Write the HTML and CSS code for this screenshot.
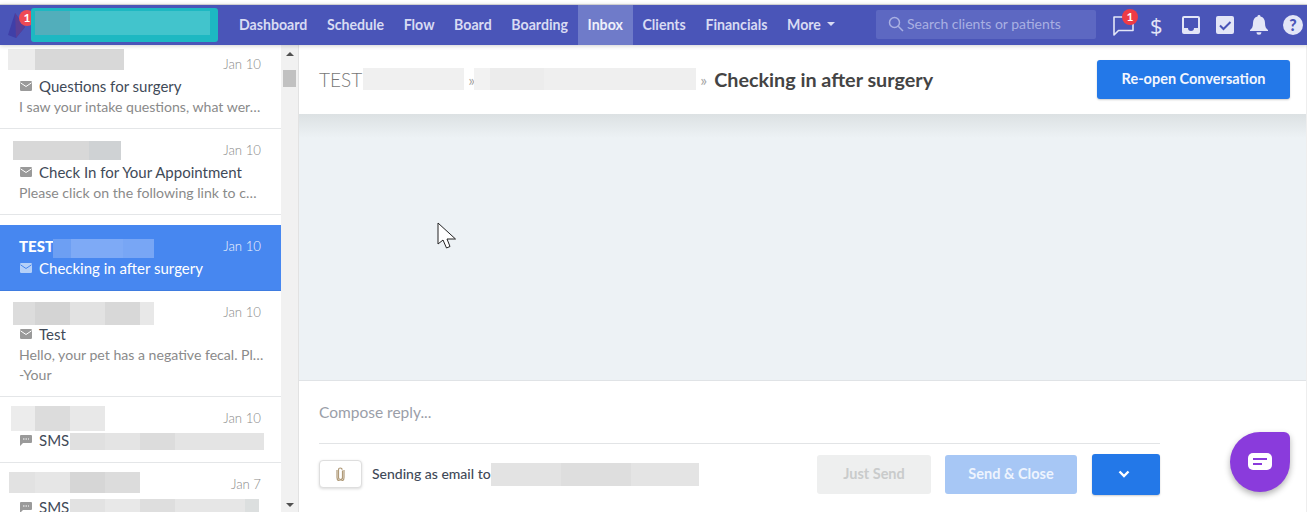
FILE: index.html
```html
<!DOCTYPE html>
<html lang="en">
<head>
<meta charset="utf-8">
<title>Inbox</title>
<link rel="stylesheet" href="styles.css">
</head>
<body>
<div class="app">
  <header class="nav">
    <div class="brand">
      <svg class="brand-mark" width="18" height="25" viewBox="0 0 18 25"><path d="M7 0 L0 22 L8 25 L17 14Z" fill="#3f3fa8"/><path d="M7 0 L17 14 L8 25Z" fill="#5a3f96"/></svg>
      <span class="brand-badge">1</span>
      <div class="brand-redact"><span class="brand-redact-in"></span></div>
    </div>
    <nav class="nav-links">
      <a class="nav-link">Dashboard</a>
      <a class="nav-link">Schedule</a>
      <a class="nav-link">Flow</a>
      <a class="nav-link">Board</a>
      <a class="nav-link">Boarding</a>
      <a class="nav-link nav-link-active">Inbox</a>
      <a class="nav-link">Clients</a>
      <a class="nav-link">Financials</a>
      <a class="nav-link">More<span class="caret"></span></a>
    </nav>
    <div class="search">
      <svg width="16" height="16" viewBox="0 0 16 16" fill="none" stroke="#a9b0e2" stroke-width="1.5"><circle cx="6.5" cy="6.5" r="5"/><path d="M10.2 10.2 L15 15"/></svg>
      <span>Search clients or patients</span>
    </div>
    <div class="nav-icons">
      <span class="nav-icon nav-chat">
        <svg width="21" height="21" viewBox="0 0 21 21" fill="none" stroke="#e3e6f7" stroke-width="1.6"><path d="M1 2 H20 V15.5 H5.5 L1 20Z" stroke-linejoin="round"/></svg>
        <span class="chat-badge">1</span>
      </span>
      <span class="nav-icon nav-dollar">$</span>
      <span class="nav-icon">
        <svg width="18" height="18" viewBox="0 0 18 18"><path fill-rule="evenodd" fill="#e3e6f7" d="M2 0H16a2 2 0 0 1 2 2V16a2 2 0 0 1-2 2H2a2 2 0 0 1-2-2V2a2 2 0 0 1 2-2ZM2 2V12H6a3 3 0 0 0 6 0H16V2Z"/></svg>
      </span>
      <span class="nav-icon">
        <svg width="18" height="18" viewBox="0 0 18 18"><rect width="18" height="18" rx="2" fill="#e3e6f7"/><path d="M4 9.5 L7.5 13 L14.5 6" fill="none" stroke="#4a55b8" stroke-width="2"/></svg>
      </span>
      <span class="nav-icon">
        <svg width="18" height="20" viewBox="0 0 18 20"><path fill="#e3e6f7" d="M9 0a1.5 1.5 0 0 1 1.5 1.6C13.500 2.300 15 5 15 8c0 4 1 5.500 3 7v1H0v-1c2-1.500 3-3 3-7 0-3 1.500-5.700 4.500-6.400A1.500 1.500 0 0 1 9 0ZM6.500 17.300h5a2.500 2.500 0 0 1-5 0Z"/></svg>
      </span>
      <span class="nav-icon nav-help">?</span>
    </div>
  </header>

  <div class="content">
    <aside class="sidebar">
      <div class="list">
        <article class="row">
          <div class="row-head"><span class="redact name-a"></span><time class="date">Jan 10</time></div>
          <div class="subject"><svg class="mail" width="12" height="10" viewBox="0 0 12 10"><rect width="12" height="10" rx="1.200" fill="#9a9a9a"/><path d="M0.500 1.800 L6 5.500 L11.500 1.800" fill="none" stroke="#fff" stroke-width="1"/></svg><span>Questions for surgery</span></div>
          <p class="preview">I saw your intake questions, what wer…</p>
        </article>
        <article class="row row-spaced">
          <div class="row-head"><span class="redact name-b"></span><time class="date">Jan 10</time></div>
          <div class="subject"><svg class="mail" width="12" height="10" viewBox="0 0 12 10"><rect width="12" height="10" rx="1.200" fill="#9a9a9a"/><path d="M0.500 1.800 L6 5.500 L11.500 1.800" fill="none" stroke="#fff" stroke-width="1"/></svg><span>Check In for Your Appointment</span></div>
          <p class="preview">Please click on the following link to c…</p>
        </article>
        <article class="row row-selected">
          <div class="row-head"><strong class="sel-name">TEST</strong><span class="redact name-sel"></span><time class="date">Jan 10</time></div>
          <div class="subject"><svg class="mail" width="12" height="10" viewBox="0 0 12 10"><rect width="12" height="10" rx="1.200" fill="#b5d0f8"/><path d="M0.500 1.800 L6 5.500 L11.500 1.800" fill="none" stroke="#4787f0" stroke-width="1"/></svg><span>Checking in after surgery</span></div>
        </article>
        <article class="row">
          <div class="row-head"><span class="redact name-c"></span><time class="date">Jan 10</time></div>
          <div class="subject"><svg class="mail" width="12" height="10" viewBox="0 0 12 10"><rect width="12" height="10" rx="1.200" fill="#9a9a9a"/><path d="M0.500 1.800 L6 5.500 L11.500 1.800" fill="none" stroke="#fff" stroke-width="1"/></svg><span>Test</span></div>
          <p class="preview">Hello, your pet has a negative fecal. Pl…</p>
          <p class="preview">-Your</p>
        </article>
        <article class="row">
          <div class="row-head"><span class="redact name-d"></span><time class="date">Jan 10</time></div>
          <div class="subject"><svg class="mail" width="12" height="11" viewBox="0 0 12 11"><path d="M1 0H11a1 1 0 0 1 1 1V7a1 1 0 0 1-1 1H3L0 11V1a1 1 0 0 1 1-1Z" fill="#9a9a9a"/><path d="M3 4H9" stroke="#fff" stroke-width="1" stroke-dasharray="1.500 1"/></svg><span>SMS</span><span class="redact sms-a"></span></div>
        </article>
        <article class="row row-last">
          <div class="row-head"><span class="redact name-e"></span><time class="date">Jan 7</time></div>
          <div class="subject"><svg class="mail" width="12" height="11" viewBox="0 0 12 11"><path d="M1 0H11a1 1 0 0 1 1 1V7a1 1 0 0 1-1 1H3L0 11V1a1 1 0 0 1 1-1Z" fill="#9a9a9a"/><path d="M3 4H9" stroke="#fff" stroke-width="1" stroke-dasharray="1.500 1"/></svg><span>SMS</span><span class="redact sms-b"></span></div>
        </article>
      </div>
      <div class="scrollbar">
        <span class="arrow-up"></span>
        <span class="thumb"></span>
        <span class="arrow-down"></span>
      </div>
    </aside>

    <main class="main">
      <div class="convo-head">
        <div class="crumbs">
          <span class="crumb">TEST</span>
          <span class="redact crumb-a"></span>
          <span class="sep">»</span>
          <span class="redact crumb-b"></span>
          <span class="sep">»</span>
          <strong class="crumb-title">Checking in after surgery</strong>
        </div>
        <button class="btn btn-reopen">Re-open Conversation</button>
      </div>
      <div class="thread">
        <svg class="cursor" width="20" height="28" viewBox="0 0 20 28"><path d="M1 1 V22 L6 18 L9.500 26 L13 24.500 L10 17 L18.500 17Z" fill="#fff" stroke="#222" stroke-width="1"/></svg>
      </div>
      <div class="compose">
        <div class="compose-input">Compose reply...</div>
        <div class="compose-foot">
          <button class="btn-attach">
            <svg width="9" height="14" viewBox="0 0 9 14" fill="none" stroke="#b09a78" stroke-width="1.200"><path d="M6.500 3.500V10.500a2 2 0 0 1-4 0V2.800a1.800 1.800 0 0 1 3.600 0"/><path d="M8 3V10.500a3.500 3.500 0 0 1-7 0V3"/></svg>
          </button>
          <span class="send-as">Sending as email to</span>
          <span class="redact send-to"></span>
          <div class="actions">
            <button class="btn btn-just">Just Send</button>
            <button class="btn btn-close">Send &amp; Close</button>
            <button class="btn btn-more">
              <svg width="12" height="8" viewBox="0 0 12 8" fill="none" stroke="#fff" stroke-width="2.400"><path d="M1.500 1.500 L6 6 L10.500 1.500"/></svg>
            </button>
          </div>
        </div>
      </div>
      <div class="chat-widget">
        <svg width="24" height="18" viewBox="0 0 24 18"><rect width="24" height="17" rx="5" fill="#fff"/><path d="M5 6H19M5 11H14" stroke="#8a3bdc" stroke-width="2"/></svg>
      </div>
    </main>
  </div>
</div>
</body>
</html>
```
FILE: styles.css
```css
* { box-sizing: border-box; }
html, body { margin: 0; padding: 0; height: 100%; overflow: hidden; background: #fff; }
body { font-family: "Lato", "Noto Sans", sans-serif; color: #3f4a58; }
p { margin: 0; }
button { font-family: inherit; border: 0; cursor: pointer; }

.app { height: 512px; display: flex; flex-direction: column; padding-top: 4px; }

/* top bar */
.nav {
  height: 41px; flex: none; background: #4a55b8; border-top: 1px solid #cfcfcf;
  display: flex; align-items: stretch; position: relative; z-index: 3;
  box-shadow: 0 1px 4px rgba(0, 0, 0, .18);
}
.brand { width: 229.200px; flex: none; position: relative; }
.brand-mark { position: absolute; left: 8px; top: 8px; }
.brand-badge {
  position: absolute; left: 19px; top: 5px; width: 16px; height: 16px; border-radius: 50%;
  background: #ef4a55; color: #fff; font-size: 12px; font-weight: 700; text-align: center; line-height: 16px;
}
.brand-redact {
  position: absolute; left: 31px; top: 3px; width: 187px; height: 34px;
  background: #1db8c2; border-radius: 3px; padding: 3px 8px 7px 4px;
}
.brand-redact-in { display: block; height: 24px; background: linear-gradient(90deg, #52aebb 35px, #42c4cc 35px); }
.nav-links { display: flex; align-items: stretch; }
.nav-link {
  display: flex; align-items: center; padding: 0 9.800px 2px;
  color: #d8dbf3; font-size: 14.150px; font-weight: 700;
}
.nav-link-active { background: #6f7bc9; color: #eef0fb; }
.caret {
  margin-left: 6px; width: 0; height: 0;
  border-left: 4px solid transparent; border-right: 4px solid transparent; border-top: 4px solid #d8dbf3;
}
.search {
  margin: 5px 0 0 auto; width: 220px; height: 29px; flex: none; border-radius: 2px; background: #5d68c2;
  display: flex; align-items: center; gap: 3px; padding: 0 0 2px 12px;
  color: #a9b0e2; font-size: 14px;
}
.nav-icons { width: 211px; flex: none; display: flex; align-items: center; padding-left: 17px; }
.nav-icon { display: flex; flex: none; position: relative; color: #e3e6f7; }
.nav-chat { width: 37px; margin-top: 1px; }
.chat-badge {
  position: absolute; left: 9px; top: -6px; width: 16px; height: 16px; border-radius: 50%;
  background: #ef3b45; color: #fff; font-size: 12px; font-weight: 700; line-height: 16px; text-align: center;
}
.nav-dollar { width: 32px; font-size: 22px; font-family: "Open Sans", sans-serif; line-height: 22px; }
.nav-icon + .nav-icon + .nav-icon { margin-right: 16px; }
.nav-icon.nav-help {
  width: 20px; height: 20px; border-radius: 50%; background: #e3e6f7; color: #4a55b8; margin: 0 0 0 -1px;
  font-size: 16px; font-weight: 900; justify-content: center; line-height: 20px;
}

/* layout */
.content { flex: 1; display: flex; min-height: 0; }
.sidebar { width: 299px; flex: none; display: flex; border-right: 1px solid #e2e2e2; }

/* list */
.list { width: 281px; flex: none; overflow: hidden; }
.row { padding: 11px 20px 11px 19px; border-bottom: 1px solid #e4e6e8; background: #fff; }
.row:first-child { margin-top: -2px; }
.row-spaced { margin-bottom: 10px; }
.row-head { height: 20px; display: flex; align-items: center; }
.date { margin: 0 0 0 auto; font-size: 13.200px; font-weight: 300; color: #8a8a8a; }
.subject { height: 20px; margin: 2px 0 1px; display: flex; align-items: center; font-size: 15px; line-height: 20px; white-space: nowrap; }
.row-last .subject { margin-top: 3px; }
.mail { margin: 0 7px 0 1px; flex: none; }
.preview { font-size: 14.100px; line-height: 20px; color: #8a8a8a; white-space: nowrap; overflow: visible; }
.row-selected { background: #4787f0; border-bottom-color: #3f7ce0; color: #fff; }
.row-selected .date { color: #f2f6fe; }
.sel-name { font-size: 15px; font-weight: 900; color: #fff; }

/* redactions */
.redact { display: block; flex: none; background: #dedede; }
.name-a { width: 116px; height: 21px; margin: -9px 0 0 -11px; background: linear-gradient(90deg, #ececec 27px, #d8d8d8 27px); }
.name-b { width: 108px; height: 19px; margin-left: -6px; background: linear-gradient(90deg, #d8d8d8 70%, #cfd2d4 70%); }
.name-c { width: 141px; height: 23px; margin: 3px 0 0 -6px; background: linear-gradient(90deg, #dcdcdc 22px, #d4d4d4 22px 57px, #e2e2e2 57px 92px, #d8d8d8 92px 127px, #e8e8e8 127px); }
.name-d { width: 94px; height: 25px; margin-left: -8px; background: linear-gradient(90deg, #ececec 24px, #dcdcdc 24px 59px, #e8e8e8 59px); }
.name-e { width: 131px; height: 21px; margin: -4px 0 0 -10px; background: linear-gradient(90deg, #e2e2e2 26px, #e6e6e6 26px 61px, #d6d6d6 61px 96px, #dcdcdc 96px); }
.name-sel { width: 101px; height: 19px; margin: 4px 0 0 -1px; background: linear-gradient(90deg, #6d9ff3 18px, #7eaaf6 18px 70px, #78a6f5 70px); }
.sms-a { width: 194px; height: 17px; margin: 2px 0 0 1px; background: linear-gradient(90deg, #e0e0e0 35px, #e4e4e4 35px 70px, #dcdcdc 70px 105px, #e4e4e4 105px); }
.sms-b { width: 189px; height: 17px; margin-left: 1px; background: linear-gradient(90deg, #e2e2e2 35px, #e8e8e8 35px 70px, #dedede 70px 105px, #e6e6e6 105px 175px, #dcdfdf 175px); }
.crumb-a { width: 101px; height: 22px; background: #f0f0f0; }
.crumb-b { width: 222px; height: 22px; margin-left: -5px; background: linear-gradient(90deg, #f2f2f2 16px, #ececec 16px 70px, #efefef 70px); }
.send-to { width: 208px; height: 23px; background: linear-gradient(90deg, #e3e3e3 70px, #dedede 70px 140px, #e4e4e4 140px); }

/* scrollbar */
.scrollbar { width: 17px; flex: none; background: #f1f1f1; display: flex; flex-direction: column; align-items: center; position: relative; }
.arrow-up { margin-top: 7px; width: 0; height: 0; border-left: 4px solid transparent; border-right: 4px solid transparent; border-bottom: 4px solid #505050; }
.thumb { margin-top: 14px; width: 13px; height: 17px; background: #c1c1c1; }
.arrow-down { margin-top: auto; margin-bottom: 5px; width: 0; height: 0; border-left: 4px solid transparent; border-right: 4px solid transparent; border-top: 4px solid #505050; }

/* main */
.main { flex: 1; min-width: 0; display: flex; flex-direction: column; position: relative; border-right: 1px solid #eee; }
.convo-head {
  height: 69px; flex: none; background: #fff; display: flex; align-items: center;
  padding: 0 16px 0 20px; justify-content: space-between; position: relative; z-index: 1;
}
.crumbs { display: flex; align-items: center; margin-top: -1px; }
.crumb { font-size: 19px; font-weight: 300; color: #777; margin-right: 1px; }
.sep { width: 11px; margin-left: 4px; font-size: 16px; color: #a4a4a4; }
.crumb-title { margin-left: 3px; font-size: 19.750px; font-weight: 700; color: #444; }
.btn { border-radius: 3px; font-size: 14.500px; font-weight: 700; height: 39px; padding: 0 0 2px; }
.btn-reopen { width: 193px; background: #2378e8; color: #f2f6fe; box-shadow: 0 1px 2px rgba(0, 0, 0, .2); }

.thread {
  flex: 1; position: relative;
  background: linear-gradient(180deg, #dce1e3 0, #edf2f5 24px);
}
.cursor { position: absolute; left: 138px; top: 108px; }

.compose { height: 132px; flex: none; background: #fff; border-top: 1px solid #e0e3e6; padding: 0 146px 0 20px; }
.compose-input { height: 63px; border-bottom: 1px solid #e2e4e6; padding-top: 20px; line-height: 22px; font-size: 15.500px; color: #9a9ea8; }
.compose-foot { display: flex; align-items: center; height: 52px; margin-top: 4px; }
.btn-attach {
  width: 43px; height: 28px; background: #fff; border: 1px solid #dedede; border-radius: 4px;
  box-shadow: 0 1px 3px rgba(0, 0, 0, .15); display: flex; align-items: center; justify-content: center; margin: 0 10px 0 0;
}
.send-as { font-size: 14px; font-weight: 500; color: #3f4a58; width: 119px; white-space: nowrap; padding-bottom: 2px; }
.actions { margin-left: auto; display: flex; align-items: center; }
.btn-just { width: 114px; background: #eeefef; color: #c9cbcb; margin-right: 14px; }
.btn-close { width: 132px; background: #a7c7f5; color: #eef4fe; margin-right: 15px; }
.btn-more { width: 68px; height: 41px; padding: 0 5px 0 0; background: #2378e8; display: flex; align-items: center; justify-content: center; box-shadow: 0 1px 2px rgba(0, 0, 0, .2); }

.chat-widget {
  position: absolute; left: 931px; top: 387px; width: 60px; height: 60px;
  background: #8a3bdc; border-radius: 50% 6px 50% 50%;
  box-shadow: 0 3px 6px rgba(0, 0, 0, .3); display: flex; align-items: center; justify-content: center;
}
```
